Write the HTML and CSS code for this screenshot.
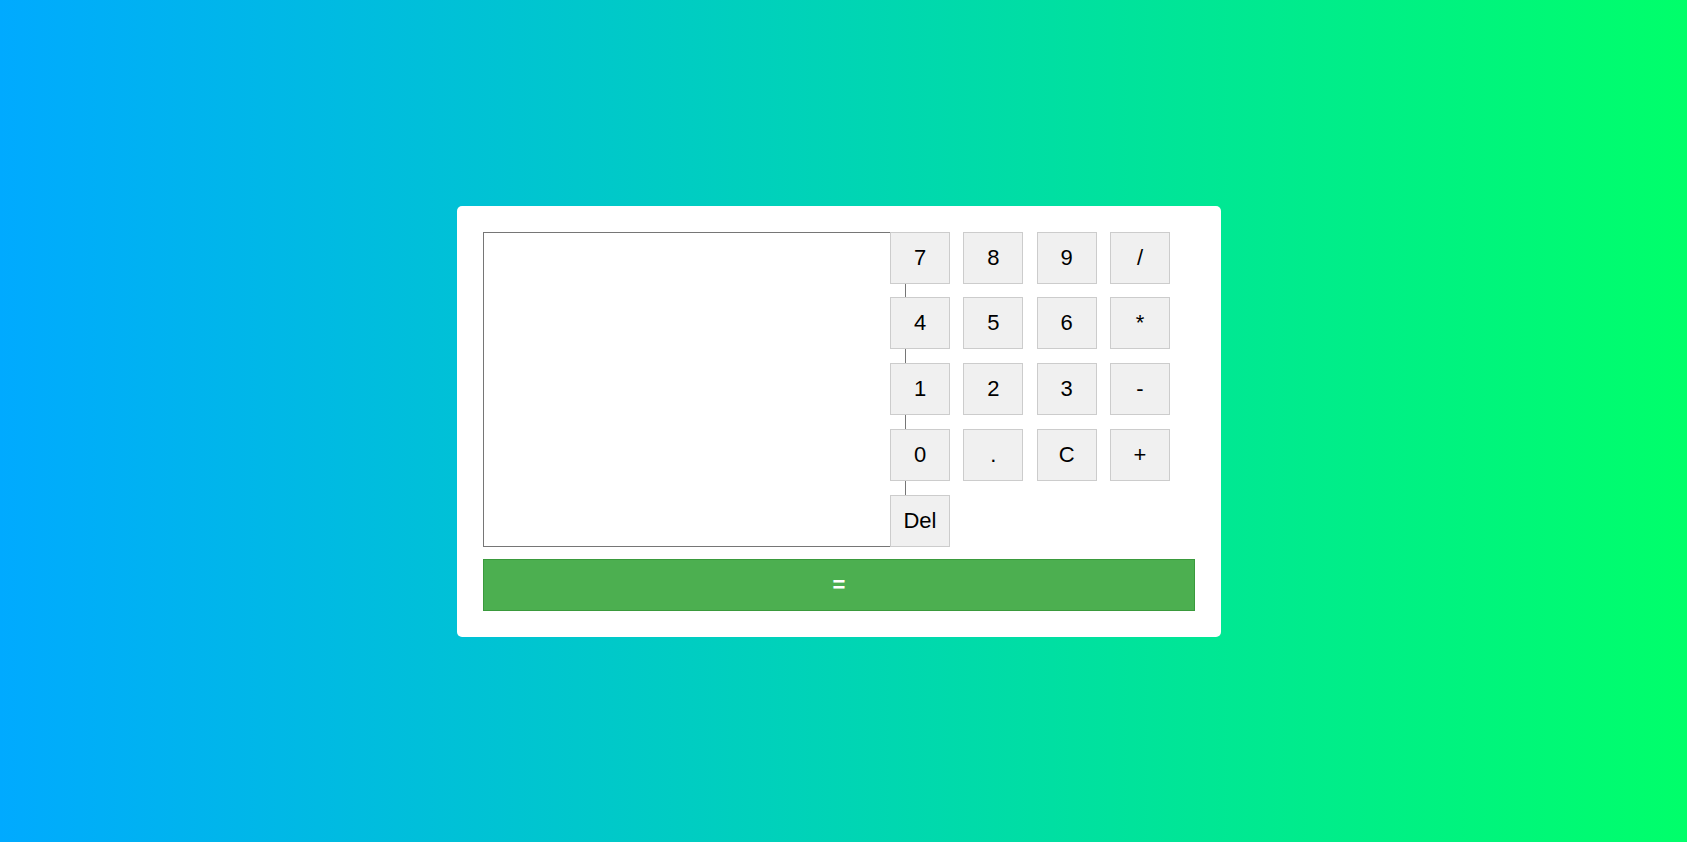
FILE: index.html
```html
<!DOCTYPE html>
<html lang="en">
<head>
<meta charset="utf-8">
<title>Calculator</title>
<link rel="stylesheet" href="styles.css">
</head>
<body>
<div class="calculator">
  <div class="top">
    <textarea class="display"></textarea>
    <div class="keypad">
      <button class="key">7</button>
      <button class="key">8</button>
      <button class="key">9</button>
      <button class="key">/</button>
      <button class="key">4</button>
      <button class="key">5</button>
      <button class="key">6</button>
      <button class="key">*</button>
      <button class="key">1</button>
      <button class="key">2</button>
      <button class="key">3</button>
      <button class="key">-</button>
      <button class="key">0</button>
      <button class="key">.</button>
      <button class="key">C</button>
      <button class="key">+</button>
      <button class="key">Del</button>
    </div>
  </div>
  <button class="equals">=</button>
</div>
</body>
</html>
```
FILE: styles.css
```css
html, body {
  margin: 0;
  height: 100%;
}
body {
  background: linear-gradient(to right, #00aaff, #00ff6a);
  display: flex;
  align-items: center;
  justify-content: center;
  padding-right: 9px;
  box-sizing: border-box;
  font-family: Arial, "Liberation Sans", sans-serif;
}
.calculator {
  background: #fff;
  border-radius: 5px;
  padding: 26px;
  width: 712px;
}
.top {
  display: flex;
  align-items: flex-start;
}
.display {
  width: 423px;
  height: 315px;
  box-sizing: border-box;
  border: 1px solid #767676;
  margin: 0;
  padding: 2px;
  resize: none;
  flex: none;
}
.keypad {
  margin-left: -16px;
  display: grid;
  grid-template-columns: repeat(4, 60px);
  grid-auto-rows: 52px;
  column-gap: 13.33px;
  row-gap: 13.75px;
}
.key {
  margin: 0;
  padding: 0;
  background: #f0f0f0;
  border: 1px solid #cccccc;
  font-family: Arial, "Liberation Sans", sans-serif;
  font-size: 22px;
  color: #000;
}
.equals {
  display: block;
  width: 100%;
  height: 52px;
  margin-top: 12px;
  background: #4caf50;
  border: 1px solid #3a9a3d;
  color: #fff;
  font-family: Arial, "Liberation Sans", sans-serif;
  font-weight: bold;
  font-size: 22px;
}
```
